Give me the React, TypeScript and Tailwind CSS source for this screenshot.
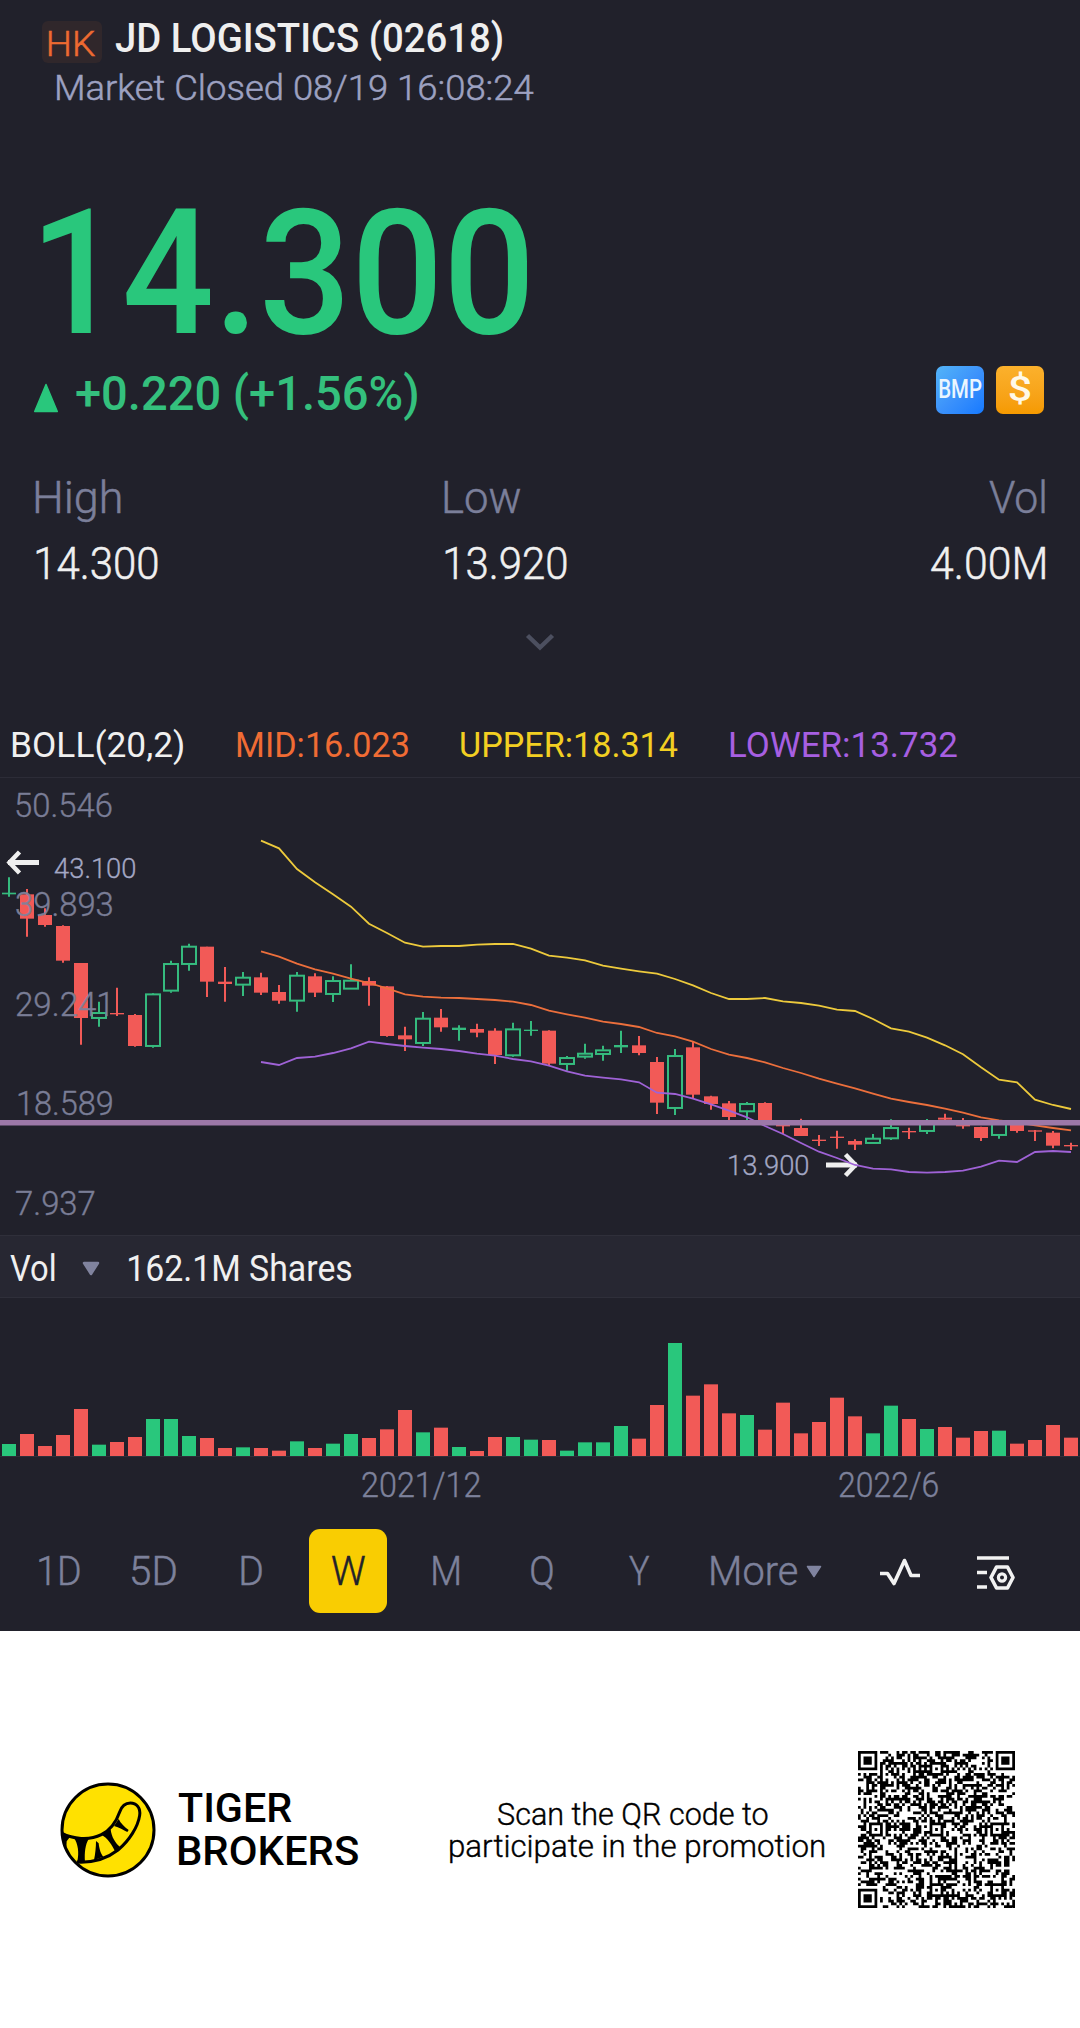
import { useLayoutEffect, useRef } from "react";
import type { ReactNode } from "react";

/** Single line of text whose drawn glyphs span exactly the width of its box. */
function Fit({ children, className = "" }: { children: string; className?: string }) {
  const box = useRef<HTMLSpanElement>(null);
  const inner = useRef<HTMLSpanElement>(null);
  useLayoutEffect(() => {
    if (!box.current || !inner.current) return;
    const cs = getComputedStyle(inner.current);
    const ctx = document.createElement("canvas").getContext("2d");
    if (!ctx) return;
    ctx.font = `${cs.fontWeight} ${cs.fontSize} ${cs.fontFamily}`;
    const m = ctx.measureText(children);
    const k = box.current.clientWidth / (m.actualBoundingBoxLeft + m.actualBoundingBoxRight);
    inner.current.style.transform = `translateX(${m.actualBoundingBoxLeft * k}px) scaleX(${k})`;
  }, [children]);
  return (
    <span ref={box} className={`block shrink-0 whitespace-nowrap ${className}`}>
      <span ref={inner} className="block w-max origin-left">{children}</span>
    </span>
  );
}

const GREEN = "#29c77c";
const RED = "#f25a57";

// [high, open/close top, open/close bottom, low] in thirds of a pixel below the chart's origin
type Candle = [string, number, number, number, number];
const candles: Candle[] = [
  ["g", 322, 368, 373, 380], ["r", 357, 373, 446, 500], ["r", 415, 435, 465, 470], ["r", 466, 468, 572, 578],
  ["r", 579, 579, 744, 824], ["g", 695, 727, 746, 770], ["r", 653, 729, 733, 738], ["r", 732, 735, 828, 830],
  ["g", 669, 671, 830, 833], ["g", 572, 580, 664, 668], ["g", 521, 528, 584, 602], ["r", 530, 530, 635, 681],
  ["r", 591, 635, 642, 695], ["g", 606, 621, 646, 678], ["r", 608, 622, 668, 675], ["r", 645, 666, 692, 701],
  ["g", 606, 615, 694, 725], ["r", 610, 619, 668, 681], ["g", 619, 631, 674, 696], ["g", 583, 630, 658, 658],
  ["r", 622, 633, 647, 707], ["r", 648, 649, 798, 800], ["r", 770, 796, 808, 843], ["g", 726, 744, 821, 828],
  ["r", 717, 743, 772, 785], ["g", 766, 773, 780, 812], ["r", 761, 777, 788, 802], ["r", 775, 782, 855, 882],
  ["g", 758, 776, 858, 860], ["g", 753, 779, 783, 797], ["r", 781, 782, 881, 886], ["g", 858, 862, 884, 902],
  ["g", 821, 849, 862, 866], ["g", 827, 839, 854, 872], ["g", 782, 825, 832, 849], ["r", 798, 826, 849, 856],
  ["r", 861, 876, 998, 1032], ["g", 837, 856, 1016, 1035], ["r", 816, 832, 974, 984], ["r", 977, 979, 1002, 1019],
  ["r", 993, 1000, 1041, 1052], ["g", 996, 1000, 1026, 1052], ["r", 997, 999, 1052, 1060], ["r", 1064, 1064, 1069, 1092],
  ["r", 1046, 1074, 1098, 1098], ["r", 1095, 1109, 1113, 1128], ["r", 1082, 1100, 1104, 1136], ["r", 1108, 1113, 1124, 1140],
  ["g", 1092, 1104, 1121, 1121], ["g", 1048, 1072, 1107, 1110], ["r", 1073, 1083, 1087, 1107], ["g", 1047, 1058, 1085, 1092],
  ["r", 1031, 1043, 1049, 1058], ["r", 1044, 1060, 1069, 1076], ["r", 1070, 1071, 1104, 1113], ["g", 1052, 1052, 1097, 1106],
  ["r", 1064, 1064, 1083, 1088], ["r", 1080, 1081, 1085, 1113], ["r", 1083, 1088, 1127, 1135], ["r", 1118, 1125, 1129, 1140],
];

const upper = [
  212, 235, 297, 337, 373, 410, 461, 489, 518, 530, 528, 528, 524, 522, 522, 536, 557, 563, 571, 587, 596, 604, 611, 627,
  646, 669, 687, 687, 684, 694, 699, 707, 719, 723, 747, 775, 785, 803, 826, 853, 892, 929, 937, 989, 1005, 1017,
];
const mid = [
  544, 560, 581, 598, 611, 626, 639, 655, 673, 680, 683, 684, 687, 690, 695, 705, 722, 733, 743, 755, 762, 771, 789, 799,
  815, 837, 854, 864, 877, 894, 909, 926, 941, 955, 971, 986, 996, 1005, 1016, 1028, 1042, 1051, 1058, 1066, 1074, 1081,
];
const lower = [
  876, 885, 864, 860, 849, 835, 815, 822, 828, 833, 837, 843, 851, 857, 867, 874, 887, 904, 917, 923, 928, 937, 968, 972,
  986, 1003, 1022, 1042, 1068, 1092, 1119, 1145, 1164, 1185, 1196, 1198, 1206, 1208, 1206, 1202, 1190, 1172, 1176, 1146, 1143, 1146,
];

// the chart's svg starts 8px below the origin of the series
const py = (v: number) => v / 3 - 8;
const line = (s: number[]) => s.map((v, i) => `${261 + i * 18},${py(v).toFixed(1)}`).join(" ");

const volumes =
  "g36 r66 r30 r63 r141 g34 r42 r57 g111 g111 g60 r54 r24 g26 r24 r16 g44 r24 g37 g66 r54 r80 r138 g71 r85 g27 r15 r57 g57 g49 r48 g16 g41 g41 g90 r52 r153 g339 r181 r215 r128 g123 r79 r160 r68 r102 r175 r119 g68 g151 r111 g81 r87 r55 r75 g76 r37 r48 r93 r55".split(" ");

function Arrow({ x, y, flip }: { x: number; y: number; flip?: boolean }) {
  return (
    <g transform={`translate(${x} ${y}) scale(${flip ? -1 : 1} 1)`} stroke="#efefef" fill="none">
      <path d="M2 0H33" strokeWidth="5" />
      <path d="M13.500 -10.500L3.500 0L13.500 10.500" strokeWidth="4.500" />
    </g>
  );
}

function PriceChart() {
  return (
    <div className="relative h-[457px]">
      <svg width="1080" height="457" viewBox="0 0 1080 457" className="block">
        {candles.map(([c, h, t, b, l], i) => {
          const x = 9 + i * 18;
          const col = c === "g" ? "#35bb7e" : RED;
          const thin = b - t < 10;
          return (
            <g key={i}>
              {c === "g" && !thin ? (
                <>
                  <path d={`M${x} ${py(h)}V${py(t)}M${x} ${py(b)}V${py(l)}`} stroke={col} strokeWidth="2" />
                  <rect x={x - 7} y={py(t) + 0.7} width="14" height={(b - t) / 3 - 1.4} fill="none" stroke={col} strokeWidth="2" />
                </>
              ) : (
                <>
                  <path d={`M${x} ${py(h)}V${py(l)}`} stroke={col} strokeWidth="2" />
                  <rect x={x - 7} y={py(t)} width="14" height={(b - t) / 3} fill={col} />
                </>
              )}
            </g>
          );
        })}
        <g fill="none" strokeWidth="1.800">
          <polyline points={line(upper)} stroke="#edca3c" />
          <polyline points={line(mid)} stroke="#ec6f3c" />
        </g>
        <Arrow x={6} y={84.500} />
        <Arrow x={859} y={387} flip />
        <polyline points={line(lower)} stroke="#9f62d6" fill="none" strokeWidth="1.800" />
        <rect x="0" y="342" width="1080" height="5.500" fill="#9c78a8" />
      </svg>
      <div className="absolute left-[16px] top-[12px] flex flex-col text-[34px] leading-[30px] font-light [-webkit-text-stroke:0.4px] text-[#7f829c] opacity-95">
        <Fit className="w-[96px] mb-[69px]">50.546</Fit>
        <Fit className="w-[96px] mb-[70px]">39.893</Fit>
        <Fit className="w-[92px] mb-[69px]">29.241</Fit>
        <Fit className="w-[94px] mb-[70px] ml-[2px]">18.589</Fit>
        <Fit className="w-[79px]">7.937</Fit>
      </div>
      <Fit className="absolute left-[54px] top-[76px] w-[81px] text-[28px] leading-[30px] font-light [-webkit-text-stroke:0.3px] text-[#a3a7c4]">43.100</Fit>
      <Fit className="absolute left-[729px] top-[373px] w-[79px] text-[28px] leading-[30px] font-light [-webkit-text-stroke:0.3px] text-[#a3a7c4]">13.900</Fit>
    </div>
  );
}

function VolumeChart() {
  return (
    <svg width="1080" height="159" viewBox="0 0 1080 159" className="block">
      <rect x="0" y="158" width="1080" height="1" fill="#2f2f3a" />
      {volumes.map((v, i) => {
        const h = Number(v.slice(1)) / 3;
        return <rect key={i} x={2 + i * 18} y={158 - h} width="14" height={h} fill={v[0] === "g" ? GREEN : RED} />;
      })}
    </svg>
  );
}

function QrCode() {
  const n = 57;
  let seed = 20220819;
  const rnd = () => {
    seed = (seed * 1664525 + 1013904223) >>> 0;
    return seed / 4294967296;
  };
  const ring = (x: number, y: number, cx: number, cy: number) => Math.max(Math.abs(x - cx), Math.abs(y - cy));
  let d = "";
  for (let y = 0; y < n; y++) {
    for (let x = 0; x < n; x++) {
      let on = rnd() < 0.5;
      if (x === 6 || y === 6) on = (x + y) % 2 === 0;
      for (const cx of [6, 28, 50]) {
        for (const cy of [6, 28, 50]) {
          const r = ring(x, y, cx, cy);
          const corner = (cx === 6 && cy !== 28) || (cy === 6 && cx !== 28);
          if (r <= 2 && !corner) on = r !== 1;
        }
      }
      for (const [cx, cy] of [[3, 3], [53, 3], [3, 53]]) {
        const r = ring(x, y, cx, cy);
        if (r <= 4) on = r !== 2 && r !== 4;
      }
      if (on) d += `M${x} ${y}h1v1h-1z`;
    }
  }
  return (
    <svg width="157" height="157" viewBox="0 0 57 57" className="block shrink-0">
      <path d={d} fill="#000" />
    </svg>
  );
}

function TigerLogo() {
  return (
    <svg width="96" height="96" viewBox="60 94 288 288" className="block shrink-0">
      <circle cx="204" cy="238" r="138" fill="#ffe100" stroke="#000" strokeWidth="9" />
      <path
        d="M66 248C98 265 148 270 184 252C216 236 230 210 239 184C246 164 258 157 271 157C290 157 302 172 299 194C294 228 268 270 234 298C203 322 163 337 110 334"
        fill="none" stroke="#000" strokeWidth="9"
      />
      <path d="M66 246L92 256L80 272L79 292L70 286Z" />
      <path d="M102 261L146 265C136 282 133 305 135 334L112 332C118 305 114 280 102 261Z" />
      <path d="M168 271L176 278C178 298 184 312 190 318L162 328C166 310 168 290 168 271Z" />
      <path d="M184 252L212 236C214 258 226 278 242 291L226 304C216 282 203 262 184 252Z" />
      <path d="M222 226L236 205C242 218 254 230 266 238L262 244C250 238 238 230 222 226Z" />
    </svg>
  );
}

function Stat({ label, value, labelClass, valueClass, className }: { label: string; value: string; labelClass: string; valueClass: string; className: string }) {
  return (
    <div className={`flex flex-col gap-[6px] text-[44.500px] leading-[60px] font-light [-webkit-text-stroke:0.5px] ${className}`}>
      <Fit className={`text-[#7b7f9a] ${labelClass}`}>{label}</Fit>
      <Fit className={`text-[#f0f0f0] ${valueClass}`}>{value}</Fit>
    </div>
  );
}

function Tab({ children, className }: { children: ReactNode; className: string }) {
  return <div className={`flex h-[84px] shrink-0 items-center ${className}`}>{children}</div>;
}

export default function App() {
  return (
    <div className="w-[1080px] h-[2028px] overflow-hidden bg-white font-[Roboto,sans-serif]">
      <div className="h-[1631px] bg-[#21212b]">
        <header>
          <div className="flex h-[75px] pl-[42px]">
            <div className="mt-[21px] flex h-[42px] w-[60px] items-center rounded-[6px] bg-[#30272b] pl-[7px] pt-[3px]">
              <Fit className="w-[46px] text-[35.500px] leading-[40px] font-light [-webkit-text-stroke:0.5px] text-[#ee6a31]">HK</Fit>
            </div>
            <Fit className="ml-[13px] w-[387px] text-[41px] leading-[76px] font-medium text-[#efefef]">JD LOGISTICS (02618)</Fit>
          </div>
          <Fit className="ml-[57px] w-[477px] text-[35.500px] leading-[26px] font-light [-webkit-text-stroke:0.5px] text-[#9da1c1]">Market Closed 08/19 16:08:24</Fit>
          <Fit className="ml-[43px] mt-[86px] w-[484px] text-[174px] leading-[174px] font-medium text-[#29c77c]">14.300</Fit>
        </header>

        <div className="flex h-[69px] items-center pl-[33px] pr-[36px]">
          <svg width="26" height="30" viewBox="0 0 26 30" className="mt-[4px] shrink-0">
            <path d="M13 1.500L24.300 28.500H1.700Z" fill={GREEN} stroke={GREEN} strokeWidth="1.500" strokeLinejoin="round" />
          </svg>
          <Fit className="ml-[17px] -mt-[4px] w-[341px] text-[47.500px] leading-[70px] font-medium text-[#34c07d]">+0.220 (+1.56%)</Fit>
          <div className="mb-[12px] ml-auto flex gap-3">
            <div className="flex size-12 items-center justify-center rounded-[7px] bg-linear-to-br from-[#54b4f8] via-[#3d93fb] to-[#1479ff]">
              <Fit className="w-[43px] text-[25px] leading-[48px] font-medium text-[#eaf6ff]">BMP</Fit>
            </div>
            <div className="flex size-12 items-center justify-center rounded-[7px] bg-linear-to-b from-[#fbb12c] to-[#f59a00]">
              <Fit className="w-[22px] text-[35px] leading-[48px] font-medium text-[#fff9e8]">$</Fit>
            </div>
          </div>
        </div>

        <div className="mt-[38px] flex pl-[36px] pr-[35px]">
          <Stat label="High" value="14.300" className="w-[409px]" labelClass="w-[85px]" valueClass="w-[122px]" />
          <Stat label="Low" value="13.920" className="w-[230px]" labelClass="w-[76px]" valueClass="w-[122px]" />
          <Stat label="Vol" value="4.00M" className="ml-auto w-[300px] items-end" labelClass="w-[56px]" valueClass="w-[114px]" />
        </div>

        <svg width="30" height="18" viewBox="0 0 30 18" className="mx-auto mt-[39px] block">
          <path d="M2.500 2.500L15 14.500L27.500 2.500" fill="none" stroke="#4c4f5f" strokeWidth="4.500" />
        </svg>

        <div className="mt-[62px] flex h-[65px] items-center border-b border-[#2c2c37] pl-[12px] text-[35.500px] leading-[64px]">
          <Fit className="w-[171px] text-[#f0f0f0]">BOLL(20,2)</Fit>
          <Fit className="ml-[54px] w-[171px] text-[#f06c34]">MID:16.023</Fit>
          <Fit className="ml-[53px] w-[217px] text-[#f2cf22]">UPPER:18.314</Fit>
          <Fit className="ml-[52px] w-[227px] text-[#a75fe2]">LOWER:13.732</Fit>
        </div>

        <PriceChart />

        <div className="flex h-[63px] items-center border-y border-[#2f2f3a] bg-[#272732] pl-[10px] pt-[4px] text-[36.500px] leading-[60px] text-[#f0f0f0]">
          <Fit className="w-[45px]">Vol</Fit>
          <svg width="18" height="15" viewBox="0 0 18 15" className="ml-[27px]">
            <path d="M2 2H16L9 13Z" fill="#80839e" stroke="#80839e" strokeWidth="2.500" strokeLinejoin="round" />
          </svg>
          <Fit className="ml-[29px] w-[223px]">162.1M Shares</Fit>
        </div>

        <VolumeChart />

        <div className="flex h-[56px] items-center pt-px pl-[362px] text-[35px] leading-[56px] font-light [-webkit-text-stroke:0.4px] text-[#7d819b]">
          <Fit className="w-[118px]">2021/12</Fit>
          <Fit className="ml-[359px] w-[99px]">2022/6</Fit>
        </div>

        <nav className="flex h-[116px] items-center text-[41px] leading-[86px] font-light [-webkit-text-stroke:0.5px] text-[#7d819b]">
          <Tab className="ml-[39px] w-[93px]"><Fit className="w-[41px]">1D</Fit></Tab>
          <Tab className="w-[109px]"><Fit className="w-[44px]">5D</Fit></Tab>
          <Tab className="w-[68px]"><Fit className="w-[21px]">D</Fit></Tab>
          <Tab className="w-[78px] justify-center rounded-[11px] bg-[#f9cd02] text-[#21212b]"><Fit className="w-[33px]">W</Fit></Tab>
          <Tab className="ml-[46px] w-[98px]"><Fit className="w-[26px]">M</Fit></Tab>
          <Tab className="w-[98px]"><Fit className="w-[22px]">Q</Fit></Tab>
          <Tab className="w-[82px]"><Fit className="w-[20px]">Y</Fit></Tab>
          <Tab className="w-[168px]">
            <Fit className="w-[86px]">More</Fit>
            <svg width="16" height="13" viewBox="0 0 16 13" className="ml-[9px]">
              <path d="M1.500 1.500H14.500L8 11.500Z" fill="#8084a0" stroke="#8084a0" strokeWidth="1.500" strokeLinejoin="round" />
            </svg>
          </Tab>
          <svg width="42" height="32" viewBox="0 0 42 32" className="mt-[4px] shrink-0">
            <path d="M1 16.500H8.500L15 26.500L25.500 3.500L32 18.500H41" fill="none" stroke="#f2f2f2" strokeWidth="3.600" strokeLinejoin="round" />
          </svg>
          <svg width="38" height="36" viewBox="0 0 38 36" className="ml-[56px] mt-[3px] shrink-0">
            <g fill="none" stroke="#f2f2f2" strokeWidth="3.600">
              <path d="M0 3H32M0 17.500H10M0 32H10" />
              <path d="M19.500 12H30.500L36 22.500L30.500 33H19.500L14 22.500Z" strokeLinejoin="round" />
              <circle cx="25" cy="22.500" r="3.600" strokeWidth="3.200" />
            </g>
          </svg>
        </nav>
      </div>

      <footer className="flex h-[397px] items-center pl-[60px]">
        <TigerLogo />
        <div className="ml-[22px] text-[40px] leading-[43px] font-medium text-black">
          <Fit className="w-[114px]">TIGER</Fit>
          <Fit className="w-[180px]">BROKERS</Fit>
        </div>
        <div className="ml-[92px] mt-[2px] flex w-[374px] flex-col text-[31.500px] leading-[32px] text-black font-light [-webkit-text-stroke:0.4px]">
          <Fit className="ml-[48px] w-[270px]">Scan the QR code to</Fit>
          <Fit className="w-[374px]">participate in the promotion</Fit>
        </div>
        <div className="ml-[34px]"><QrCode /></div>
      </footer>
    </div>
  );
}
